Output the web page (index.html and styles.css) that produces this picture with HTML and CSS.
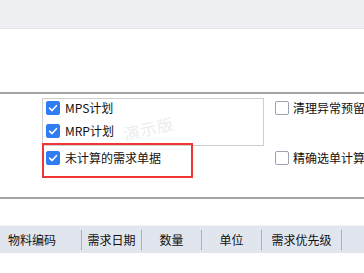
FILE: index.html
```html
<!DOCTYPE html>
<html lang="zh">
<head>
<meta charset="utf-8">
<link rel="stylesheet" href="styles.css">
</head>
<body>
<div class="topbar"></div>
<div class="rule"></div>
<section class="options">
  <div class="col-left">
    <div class="listbox">
      <div class="item">
        <span class="cb checked"><svg viewBox="0 0 14 14"><path d="M3 7.2 L5.9 10 L11 4.3" /></svg></span>
        <span class="label">MPS计划</span>
      </div>
      <div class="item">
        <span class="cb checked"><svg viewBox="0 0 14 14"><path d="M3 7.2 L5.9 10 L11 4.3" /></svg></span>
        <span class="label">MRP计划</span>
      </div>
    </div>
    <div class="item item-out">
      <span class="cb checked"><svg viewBox="0 0 14 14"><path d="M3 7.2 L5.9 10 L11 4.3" /></svg></span>
      <span class="label">未计算的需求单据</span>
    </div>
  </div>
  <div class="col-right">
    <div class="item ritem">
      <span class="cb"></span>
      <span class="label">清理异常预留量</span>
    </div>
    <div class="item ritem ritem2">
      <span class="cb"></span>
      <span class="label">精确选单计算</span>
    </div>
  </div>
  <div class="watermark">演示版</div>
  <div class="highlight"></div>
</section>
<div class="rule"></div>
<div class="header">
  <div class="hcell c1">物料编码</div>
  <div class="hcell c2">需求日期</div>
  <div class="hcell c3">数量</div>
  <div class="hcell c4">单位</div>
  <div class="hcell c5">需求优先级</div>
</div>
</body>
</html>
```
FILE: styles.css
```css
* { box-sizing: border-box; }
html, body {
  margin: 0;
  padding: 0;
  background: #ffffff;
  width: 364px;
  height: 273px;
  overflow: hidden;
  font-family: "Noto Sans CJK SC", "Noto Sans", sans-serif;
  font-size: 12px;
  color: #111111;
}
.topbar {
  height: 29px;
  background: #eeeff3;
  border-bottom: 1px solid #e4e5ea;
  margin-bottom: 63px;
}
.rule {
  height: 2px;
  background: #a3a3a3;
}
.options {
  position: relative;
  height: 103px;
  display: flex;
  padding-left: 42px;
  padding-top: 4px;
}
.col-left {
  display: flex;
  flex-direction: column;
  width: 222px;
}
.listbox {
  border: 1px solid #cfcfcf;
  height: 48px;
  width: 222px;
  padding-left: 3px;
}
.item {
  display: flex;
  align-items: flex-start;
  height: 23px;
  white-space: nowrap;
}
.item-out {
  margin-top: 3px;
  padding-left: 4px;
}
.cb {
  width: 14px;
  height: 14px;
  margin-top: 2px;
  border-radius: 2px;
  border: 1px solid #9ca2b0;
  background: #ffffff;
  flex: none;
  display: flex;
}
.cb.checked {
  background: #2f7cf3;
  border-color: #2f7cf3;
}
.cb svg {
  width: 12px;
  height: 12px;
}
.cb svg path {
  fill: none;
  stroke: #ffffff;
  stroke-width: 1.8;
  stroke-linecap: round;
  stroke-linejoin: round;
}
.label {
  margin-left: 5px;
  margin-top: 2px;
  line-height: 14px;
}
.col-right {
  display: flex;
  flex-direction: column;
  margin-left: 11px;
  padding-top: 1px;
}
.ritem .label { margin-left: 4px; }
.ritem2 { margin-top: 27px; }
.watermark {
  position: absolute;
  left: 123px;
  top: 22px;
  font-size: 16px;
  color: #ececec;
  transform: rotate(-12deg);
  letter-spacing: 1px;
  white-space: nowrap;
}
.highlight {
  position: absolute;
  left: 42px;
  top: 49px;
  width: 151px;
  height: 35px;
  border: 2px solid #ef3535;
}
.header {
  margin-top: 26px;
  border-top: 1px solid #f3f4f7;
  height: 28px;
  background: #e1e5ee;
  display: flex;
  align-items: center;
}
.hcell {
  height: 20px;
  line-height: 20px;
  border-right: 1px solid #aab0bc;
  text-align: center;
  white-space: nowrap;
  color: #111111;
}
.c1 { width: 82px; text-align: left; padding-left: 8px; }
.c2 { width: 60px; }
.c3 { width: 60px; }
.c4 { width: 60px; }
.c5 { width: 80px; }
```
